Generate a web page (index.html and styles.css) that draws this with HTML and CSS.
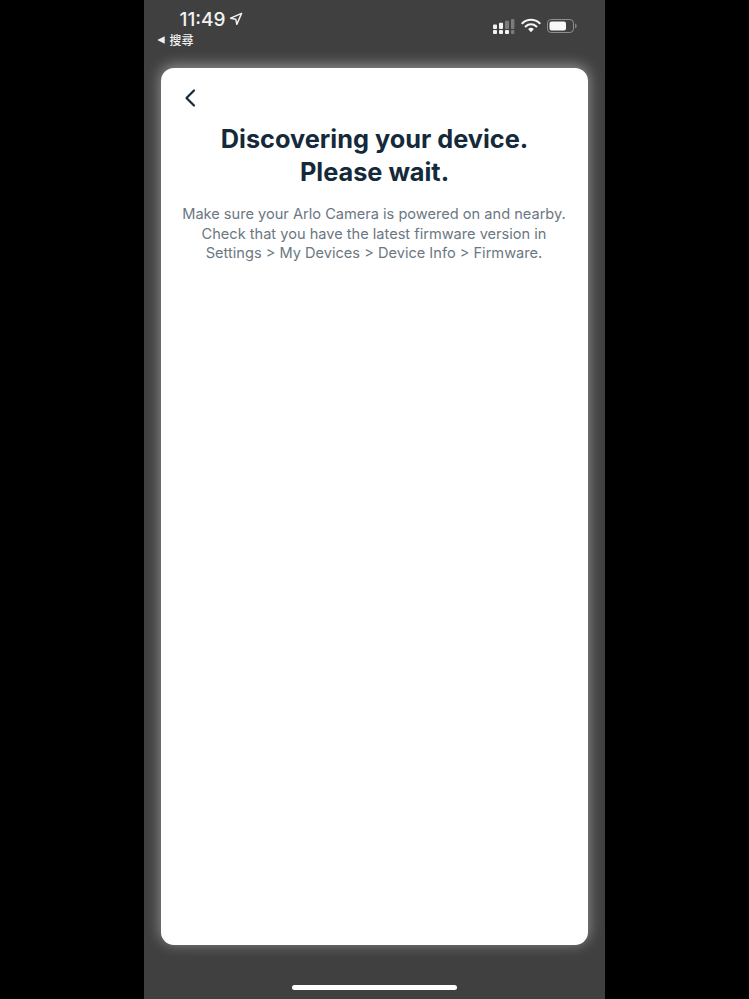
FILE: index.html
```html
<!DOCTYPE html>
<html lang="zh-Hant">
<head>
<meta charset="utf-8">
<title>Discovering your device</title>
<link rel="stylesheet" href="styles.css">
</head>
<body>
<div class="phone">
  <header class="status">
    <div class="status-left">
      <div class="time-row">
        <span class="time">11:49</span>
        <svg class="loc" viewBox="0 0 14 14" width="14" height="14"><path d="M12.6 1.4 1.6 6.2l5.2 1 1 5.2z" fill="none" stroke="#f2f2f2" stroke-width="1.4" stroke-linejoin="round"/></svg>
      </div>
      <div class="back-row">
        <svg class="tri" viewBox="0 0 8 8" width="8" height="8"><path d="M0.3 4 7.7 0.3v7.4z" fill="#f2f2f2"/></svg>
        <span class="back-label">搜尋</span>
      </div>
    </div>
    <div class="status-right">
      <svg class="signal" viewBox="0 0 22 16" width="22" height="16">
        <g fill="#f2f2f2">
          <rect x="0" y="11" width="4" height="4" rx="1"/><rect x="0" y="5.4" width="4" height="4.6" rx="1"/>
          <rect x="6" y="11" width="4" height="4" rx="1"/><rect x="6" y="3.8" width="4" height="6.2" rx="1"/>
          <rect x="12" y="11" width="4" height="4" rx="1"/>
        </g>
        <g fill="#7c7c7c">
          <rect x="12" y="1.8" width="4" height="8.2" rx="1"/>
          <rect x="18" y="0" width="3.4" height="10" rx="1"/><rect x="18" y="11" width="3.4" height="4" rx="1"/>
        </g>
      </svg>
      <svg class="wifi" viewBox="0 0 20 15" width="20" height="15">
        <g fill="none" stroke="#f6f6f6" stroke-width="2.1" stroke-linecap="round">
          <path d="M1.4 5.2a12.4 12.4 0 0 1 17.2 0"/>
          <path d="M4.6 8.4a7.8 7.8 0 0 1 10.8 0"/>
        </g>
        <path d="M7.1 11.1a4.2 4.2 0 0 1 5.8 0L10 14.2z" fill="#f6f6f6"/>
      </svg>
      <svg class="battery" viewBox="0 0 30 14" width="30" height="14">
        <rect x="0.5" y="0.5" width="26" height="13" rx="3.6" fill="none" stroke="#8e8e8e"/>
        <rect x="2.5" y="2.5" width="16.5" height="9" rx="2" fill="#f8f8f8"/>
        <path d="M28.2 4.8c1 .3 1.4 1.1 1.4 2.2s-.4 1.9-1.4 2.2z" fill="#8e8e8e"/>
      </svg>
    </div>
  </header>
  <main class="card">
    <button class="back-btn" aria-label="Back">
      <svg viewBox="0 0 12 20" width="12" height="20"><path d="M10 2.5 2.5 10l7.5 7.5" fill="none" stroke="#14293a" stroke-width="2.2" stroke-linecap="round" stroke-linejoin="round"/></svg>
    </button>
    <h1 class="title">Discovering your device.<br>Please wait.</h1>
    <p class="desc">Make sure your Arlo Camera is powered on and nearby.<br>Check that you have the latest firmware version in<br>Settings &gt; My Devices &gt; Device Info &gt; Firmware.</p>
  </main>
  <footer class="home-area"><span class="home-bar"></span></footer>
</div>
</body>
</html>
```
FILE: styles.css
```css
* { box-sizing: border-box; }
html, body { margin: 0; height: 100%; }
body {
  background: #000;
  display: flex;
  justify-content: center;
  font-family: Inter, "Noto Sans CJK TC", sans-serif;
  overflow: hidden;
}
.phone {
  width: 461px;
  height: 999px;
  margin-left: -1px;
  background: #404040;
  display: flex;
  flex-direction: column;
  align-items: center;
}
.status {
  width: 100%;
  height: 68px;
  display: flex;
  justify-content: space-between;
  padding: 9px 28px 0 13px;
  color: #f2f2f2;
}
.status-left { display: flex; flex-direction: column; }
.time-row { display: flex; align-items: center; gap: 4px; margin-left: 23px; height: 20px; }
.time { font-size: 19px; font-weight: 500; line-height: 20px; padding-top: 1px; }
.back-row { display: flex; align-items: center; gap: 5px; height: 16px; margin-top: 3px; }
.back-label { font-size: 12px; font-weight: 500; line-height: 16px; font-family: "Noto Sans CJK TC", sans-serif; }
.status-right { display: flex; align-items: flex-start; gap: 6px; padding-top: 10px; }
.wifi { margin-top: -1px; }
.battery { margin-top: 0; }
.card {
  width: 427px;
  height: 877px;
  background: #fff;
  border-radius: 13px;
  box-shadow: 0 -2px 14px 1px rgba(255, 255, 255, .42);
  padding: 20px 20px 0;
  display: flex;
  flex-direction: column;
  align-items: center;
}
.back-btn {
  align-self: flex-start;
  border: 0;
  background: none;
  padding: 0;
  margin-left: 3px;
  width: 12px;
  height: 20px;
  display: block;
}
.title {
  margin: 14px 0 0;
  padding-left: 1px;
  font-size: 25.3px;
  line-height: 33px;
  font-weight: 700;
  color: #14293a;
  text-align: center;
  white-space: nowrap;
}
.desc {
  margin: 17px 0 0;
  font-size: 14.6px;
  line-height: 19.5px;
  color: #6b7782;
  text-align: center;
  white-space: nowrap;
}
.home-area {
  flex: 1;
  width: 100%;
  display: flex;
  justify-content: center;
  padding-top: 40px;
}
.home-bar { width: 165px; height: 5px; border-radius: 3px; background: #fff; }
```
